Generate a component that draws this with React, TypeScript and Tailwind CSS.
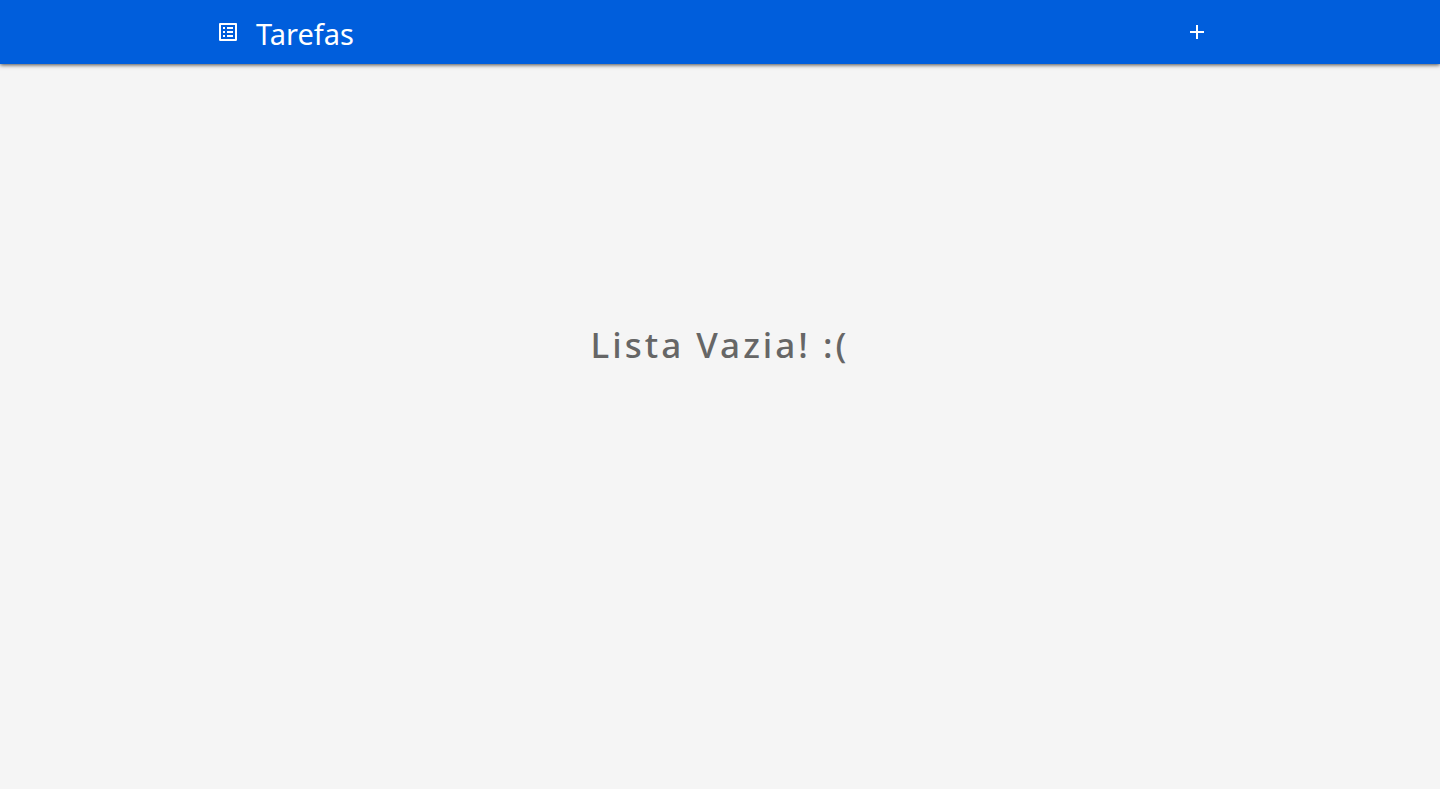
import { MdAdd, MdOutlineListAlt } from 'react-icons/md';

export default function App() {
  return (
    <div className="flex min-h-screen flex-col bg-[#f5f5f5] font-['Noto_Sans',sans-serif]">
      <header className="bg-[#005edc] text-white shadow-[0_1px_4px_rgba(0,0,0,0.7)]">
        <div className="mx-auto flex h-16 w-full max-w-[1008px] items-center justify-between pr-[7px]">
          <div className="flex items-center gap-4">
            <MdOutlineListAlt size={24} aria-hidden="true" />
            <h1 className="pt-1 text-[29px] leading-10">Tarefas</h1>
          </div>
          <button type="button" aria-label="Adicionar tarefa" className="flex p-2">
            <MdAdd size={24} />
          </button>
        </div>
      </header>
      <main className="flex justify-center pt-[261px]">
        <h2 className="text-[35px] leading-10 font-medium tracking-[3px] text-[#666]">Lista Vazia! :(</h2>
      </main>
    </div>
  );
}
